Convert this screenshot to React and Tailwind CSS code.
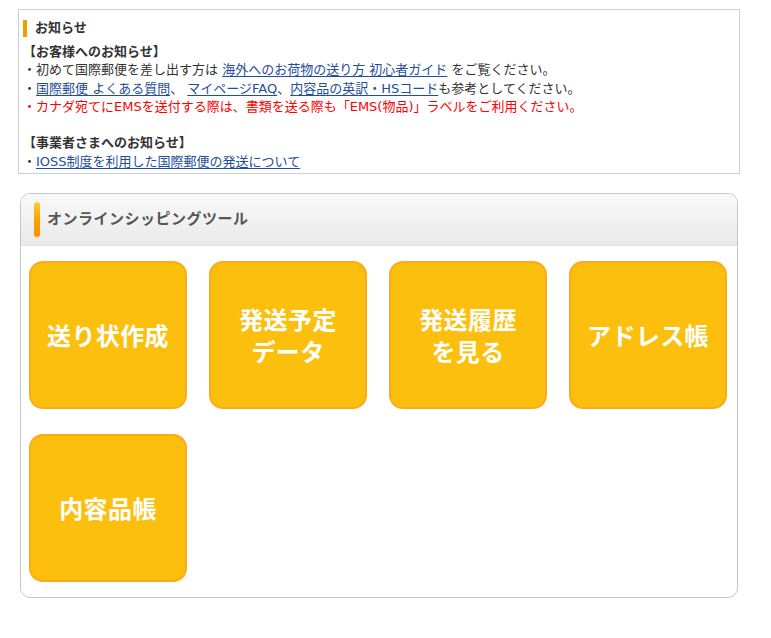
import React from "react";

const A = ({ children }) => (
  <a href="#" className="text-[#1f4e9c] underline underline-offset-2">
    {children}
  </a>
);

const buttons = [
  ["送り状作成"],
  ["発送予定", "データ"],
  ["発送履歴", "を見る"],
  ["アドレス帳"],
  ["内容品帳"],
];

export default function App() {
  return (
    <div className="bg-white w-[771px] h-[638px] pt-[9px] pl-[18px] font-['DejaVu_Sans','Noto_Sans_CJK_JP',sans-serif] text-[#333]">
      <div className="w-[722px]">
        {/* Notice box */}
        <div className="border border-[#cfcfcf] pl-[4px] pt-[9px] pb-[2px] text-[13px] leading-[18.3px]">
          <div className="flex items-center gap-[8px] h-[19px] font-bold text-[13px]">
            <span className="w-[4px] h-[17px] bg-[#f59a00]"></span>
            <span>お知らせ</span>
          </div>
          <div className="mt-[5px]">
            <div className="font-bold">【お客様へのお知らせ】</div>
            <div>
              ・初めて国際郵便を差し出す方は <A>海外へのお荷物の送り方 初心者ガイド</A> をご覧ください。
            </div>
            <div>
              ・<A>国際郵便 よくある質問</A>、 <A>マイページFAQ</A>、<A>内容品の英訳・HSコード</A>も参考としてください。
            </div>
            <div className="text-[#ff0000]">
              ・カナダ宛てにEMSを送付する際は、書類を送る際も「EMS(物品)」ラベルをご利用ください。
            </div>
            <div className="h-[18.3px]"></div>
            <div className="font-bold">【事業者さまへのお知らせ】</div>
            <div>
              ・<A>IOSS制度を利用した国際郵便の発送について</A>
            </div>
          </div>
        </div>

        {/* Online shipping tool */}
        <div className="mt-[19px] mx-[2px] border border-[#c6c6c6] rounded-[10px] overflow-hidden">
          <div className="h-[52px] flex items-center pl-[13px] gap-[7px] bg-gradient-to-b from-[#f9f9f9] to-[#e9e9e9] border-b border-[#e2e2e2]">
            <span className="w-[6px] h-[35px] rounded-full bg-gradient-to-b from-[#ffcc33] via-[#f9a200] to-[#f39200]"></span>
            <span className="font-bold text-[15px] text-[#555] tracking-[0.5px]">オンラインシッピングツール</span>
          </div>
          <div className="grid grid-cols-[repeat(4,158px)] gap-x-[22px] gap-y-[25px] pl-[8px] pt-[15px] pb-[15px]">
            {buttons.map((lines, i) => (
              <div
                key={i}
                className="h-[148px] rounded-[14px] bg-[#fdbf0e] border-2 border-[#fcaa18] flex flex-col items-center justify-center text-white font-bold text-[24px] leading-[32px] tracking-[0.4px] font-['Noto_Sans_CJK_JP',sans-serif]"
              >
                {lines.map((l, j) => (
                  <div key={j}>{l}</div>
                ))}
              </div>
            ))}
          </div>
        </div>
      </div>
    </div>
  );
}
